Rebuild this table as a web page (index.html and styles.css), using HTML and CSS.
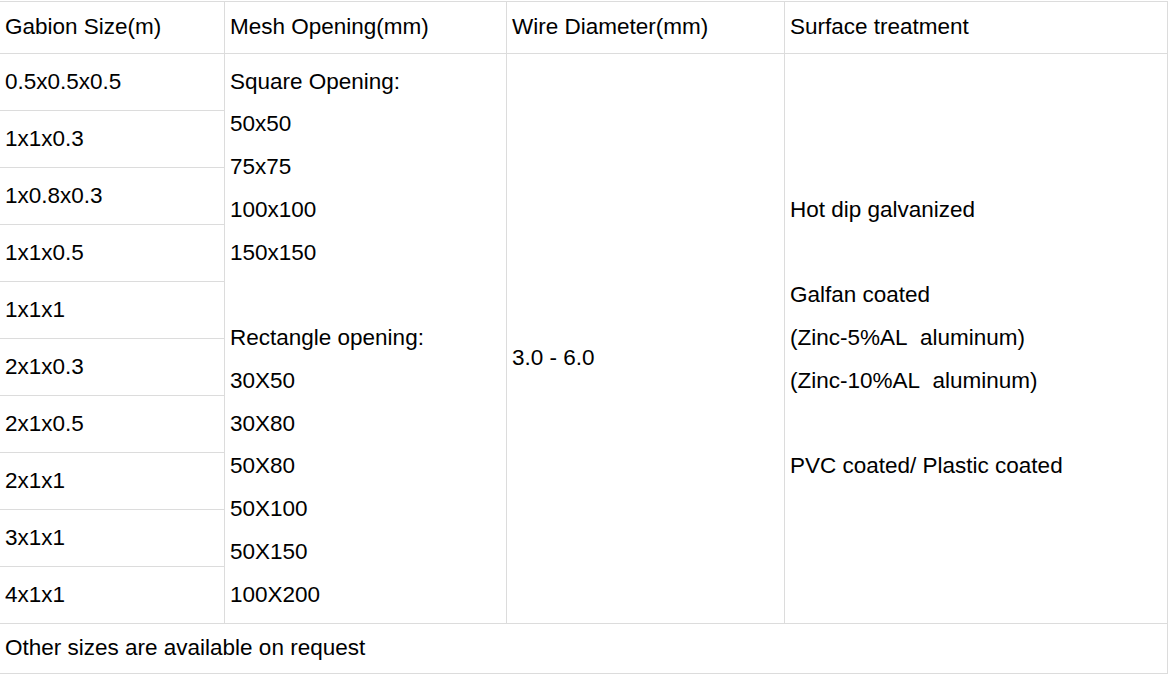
FILE: index.html
```html
<!DOCTYPE html>
<html>
<head>
<meta charset="utf-8">
<link rel="stylesheet" href="styles.css">
</head>
<body>
<table class="spec">
  <colgroup>
    <col class="c1"><col class="c2"><col class="c3"><col class="c4">
  </colgroup>
  <tr class="head">
    <td>Gabion Size(m)</td>
    <td>Mesh Opening(mm)</td>
    <td>Wire Diameter(mm)</td>
    <td>Surface treatment</td>
  </tr>
  <tr class="row">
    <td>0.5x0.5x0.5</td>
    <td rowspan="10" class="multi">Square Opening:<br>50x50<br>75x75<br>100x100<br>150x150<br><br>Rectangle opening:<br>30X50<br>30X80<br>50X80<br>50X100<br>50X150<br>100X200</td>
    <td rowspan="10" class="wire">3.0 - 6.0</td>
    <td rowspan="10" class="multi">Hot dip galvanized<br><br>Galfan coated<br>(Zinc-5%AL&nbsp; aluminum)<br>(Zinc-10%AL&nbsp; aluminum)<br><br>PVC coated/ Plastic coated</td>
  </tr>
  <tr class="row"><td>1x1x0.3</td></tr>
  <tr class="row"><td>1x0.8x0.3</td></tr>
  <tr class="row"><td>1x1x0.5</td></tr>
  <tr class="row"><td>1x1x1</td></tr>
  <tr class="row"><td>2x1x0.3</td></tr>
  <tr class="row"><td>2x1x0.5</td></tr>
  <tr class="row"><td>2x1x1</td></tr>
  <tr class="row"><td>3x1x1</td></tr>
  <tr class="row"><td>4x1x1</td></tr>
  <tr class="foot">
    <td colspan="4">Other sizes are available on request</td>
  </tr>
</table>
</body>
</html>
```
FILE: styles.css
```css
html, body {
  margin: 0;
  padding: 0;
  background: #fff;
}
body {
  font-family: "Liberation Sans", Arial, sans-serif;
  font-size: 22.5px;
  color: #000;
}
.spec {
  border-collapse: collapse;
  table-layout: fixed;
  width: 1168px;
  margin: 1px 0 0 -1px;
}
.c1 { width: 225px; }
.c2 { width: 282px; }
.c3 { width: 278px; }
.c4 { width: 383px; }
.spec td {
  border: 1px solid #dcdcdc;
  padding: 0 4px 0 5px;
  vertical-align: middle;
  line-height: 42.75px;
  white-space: nowrap;
}
.head { height: 52px; }
.row { height: 57px; }
.foot { height: 50px; }
.wire { padding-top: 40px !important; }
```
